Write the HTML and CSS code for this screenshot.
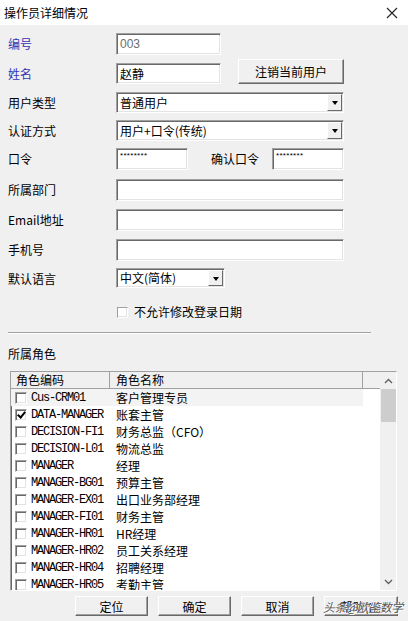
FILE: index.html
```html
<!DOCTYPE html>
<html lang="zh-CN">
<head>
    <meta charset="UTF-8">
    <title>操作员详细情况</title>
    <link rel="stylesheet" href="styles.css">
</head>
<body>
    <!-- window title -->
    <div class="titlebar">
        <span class="title">操作员详细情况</span>
        <svg class="close" width="12" height="12" viewBox="0 0 12 12">
            <path d="M1 1L11 11M11 1L1 11" stroke="#222" stroke-width="1.1" fill="none"/>
        </svg>
    </div>

    <div class="form">
        <div class="lbl blue">编号</div>
        <div class="cell"><div class="edit w105 disabled">003</div></div>

        <div class="lbl blue">姓名</div>
        <div class="cell">
            <div class="edit w105 h21">赵静</div>
            <button class="btn logout">注销当前用户</button>
        </div>

        <div class="lbl">用户类型</div>
        <div class="cell"><div class="combo wide">普通用户<span class="drop"></span></div></div>

        <div class="lbl">认证方式</div>
        <div class="cell"><div class="combo wide">用户+口令(传统)<span class="drop"></span></div></div>

        <div class="lbl">口令</div>
        <div class="cell">
            <div class="edit w72 pwd">********</div>
            <div class="lbl confirm">确认口令</div>
            <div class="edit w72 pwd">********</div>
        </div>

        <div class="lbl">所属部门</div>
        <div class="cell"><div class="edit wide"></div></div>

        <div class="lbl">Email地址</div>
        <div class="cell"><div class="edit wide"></div></div>

        <div class="lbl">手机号</div>
        <div class="cell"><div class="edit wide"></div></div>

        <div class="lbl">默认语言</div>
        <div class="cell"><div class="combo lang">中文(简体)<span class="drop"></span></div></div>

        <div></div>
        <div class="cell check-row"><span class="chk"></span>不允许修改登录日期</div>
    </div>

    <div class="sep"></div>
    <div class="section">所属角色</div>

    <div class="list">
        <div class="list-body">
            <div class="list-head">
                <div class="hcol c1">角色编码</div>
                <div class="hcol c2">角色名称</div>
                <div class="hcol c3"></div>
            </div>
            <div id="rows"></div>
        </div>
        <div class="scrollbar">
            <div class="sb-btn">
                <svg width="9" height="6" viewBox="0 0 9 6"><path d="M1 5L4.5 1.5L8 5" stroke="#606060" stroke-width="1.4" fill="none"/></svg>
            </div>
            <div class="thumb"></div>
            <div class="sb-track"></div>
            <div class="sb-btn">
                <svg width="9" height="6" viewBox="0 0 9 6"><path d="M1 1L4.5 4.5L8 1" stroke="#606060" stroke-width="1.4" fill="none"/></svg>
            </div>
        </div>
    </div>

    <div class="buttons">
        <button class="btn">定位</button>
        <button class="btn">确定</button>
        <button class="btn">取消</button>
        <button class="btn">帮助(H)</button>
        <span class="watermark">头条@欧鉴数学</span>
    </div>

    <script>
        const roles = [
            ["Cus-CRM01", "客户管理专员", false],
            ["DATA-MANAGER", "账套主管", true],
            ["DECISION-FI1", "财务总监（CFO）", false],
            ["DECISION-L01", "物流总监", false],
            ["MANAGER", "经理", false],
            ["MANAGER-BG01", "预算主管", false],
            ["MANAGER-EX01", "出口业务部经理", false],
            ["MANAGER-FI01", "财务主管", false],
            ["MANAGER-HR01", "HR经理", false],
            ["MANAGER-HR02", "员工关系经理", false],
            ["MANAGER-HR04", "招聘经理", false],
            ["MANAGER-HR05", "考勤主管", false]
        ];

        const rowsDiv = document.getElementById('rows');
        roles.forEach((r, i) => {
            const row = document.createElement('div');
            row.className = 'row' + (i === 0 ? ' current' : '');
            row.innerHTML = `<div class="code"><span class="chk${r[2] ? ' on' : ''}"></span>${r[0]}</div><div class="name">${r[1]}</div>`;
            rowsDiv.appendChild(row);
        });
    </script>
</body>
</html>
```

FILE: styles.css
```css
body { margin: 0; width: 408px; height: 621px; overflow: hidden; background: #f0f0f0; font-family: "Noto Sans CJK SC", "Liberation Sans", sans-serif; font-size: 12px; color: #000; }

.titlebar { height: 25px; background: #fff; display: flex; align-items: center; justify-content: space-between; padding: 0 10px 0 4px; }
.title { line-height: 25px; }
.close { margin-top: 1px; }

.form { display: grid; grid-template-columns: 108px 1fr; grid-template-rows: 30px 29px 28px 28px 31px 30px 30px 29px 36px 16px; padding: 8px 0 0 8px; }
.lbl { line-height: 22px; white-space: nowrap; }
.blue { color: #3434b4; }
.cell { display: flex; align-items: flex-start; }
.confirm { margin: 0 13px 0 23px; }

.edit { box-sizing: border-box; height: 22px; background: #fff; border: 1px solid; border-color: #a0a0a0 #fff #fff #a0a0a0; box-shadow: inset 1px 1px 0 #696969, inset -1px -1px 0 #e3e3e3; padding: 0 3px; line-height: 20px; white-space: nowrap; overflow: hidden; }
.h21 { height: 21px; line-height: 19px; }
.w105 { width: 105px; }
.w72 { width: 72px; }
.wide { width: 228px; }
.disabled { color: #6d6d6d; font-family: "Liberation Sans", sans-serif; }
.pwd { font-size: 8px; line-height: 14px; letter-spacing: 0.3px; font-family: "Liberation Sans", sans-serif; }

.combo { position: relative; box-sizing: border-box; height: 21px; background: #fff; border: 1px solid; border-color: #a0a0a0 #fff #fff #a0a0a0; box-shadow: inset 1px 1px 0 #696969, inset -1px -1px 0 #e3e3e3; padding: 0 3px; line-height: 19px; }
.lang { width: 109px; height: 20px; line-height: 18px; }
.drop { position: absolute; right: 1px; top: 1px; bottom: 1px; width: 15px; background: #f0f0f0; box-sizing: border-box; border: 1px solid; border-color: #fff #696969 #696969 #fff; }
.drop::after { content: ""; position: absolute; left: 4px; top: 6px; border-style: solid; border-width: 4px 3.5px 0 3.5px; border-color: #000 transparent transparent transparent; }

.btn { box-sizing: border-box; height: 20px; width: 73px; padding: 0; background: #f0f0f0; font: inherit; color: #000; border: 1px solid; border-color: #fff #696969 #696969 #fff; box-shadow: inset -1px -1px 0 #a0a0a0; }
.logout { width: 106px; height: 25px; margin: -4px 0 0 17px; }

.check-row { align-items: center; gap: 6px; line-height: 16px; }
.chk { box-sizing: border-box; width: 12px; height: 12px; background: #fff; border: 1px solid; border-color: #a0a0a0 #fff #fff #a0a0a0; box-shadow: inset 1px 1px 0 #696969, inset -1px -1px 0 #e3e3e3; flex: none; position: relative; }
.check-row .chk { margin-left: 1px; width: 11px; height: 11px; box-shadow: inset -1px -1px 0 #e3e3e3; }
.chk.on::after { content: ""; position: absolute; left: 3px; top: 0px; width: 3px; height: 6px; border: solid #000; border-width: 0 2px 2px 0; transform: rotate(40deg); }

.sep { margin: 12px 0 0 8px; width: 363px; border-top: 1px solid #a0a0a0; border-bottom: 1px solid #fff; }
.section { margin: 11px 0 0 8px; line-height: 17px; }

.list { box-sizing: border-box; margin: 9px 0 0 10px; width: 387px; height: 220px; display: flex; border: 1px solid; border-color: #a0a0a0 #fff #fff #a0a0a0; box-shadow: inset 1px 1px 0 #696969; overflow: hidden; background: #fff; }
.list-body { width: 369px; overflow: hidden; }
.list-head { display: flex; height: 17px; background: #f0f0f0; border-bottom: 1px solid #a0a0a0; box-sizing: border-box; }
.hcol { line-height: 16px; border-right: 1px solid #a0a0a0; box-sizing: border-box; }
.c1 { width: 99px; padding-left: 5px; }
.c2 { width: 253px; padding-left: 6px; }
.c3 { flex: 1; border-right: none; }

.row { display: flex; height: 17px; align-items: center; }
.row.current .code, .row.current .name { background: #f3f3f3; }
.code { display: flex; align-items: center; gap: 4px; width: 99px; height: 17px; padding-left: 4px; box-sizing: border-box; font-family: "Liberation Mono", monospace; font-size: 12px; letter-spacing: -1.2px; white-space: nowrap; }
.name { width: 253px; height: 17px; line-height: 17px; padding-left: 6px; box-sizing: border-box; white-space: nowrap; }

.scrollbar { width: 16px; display: flex; flex-direction: column; background: #f0f0f0; }
.sb-btn { height: 17px; display: flex; align-items: center; justify-content: center; flex: none; }
.thumb { height: 33px; margin: 0 0 0 1px; background: #cdcdcd; flex: none; }
.sb-track { flex: 1; }

.buttons { position: relative; display: flex; gap: 10px; margin: 5px 0 0 75px; }
.buttons .btn:last-of-type { width: 74px; }
.watermark { position: absolute; left: 248px; top: 2px; color: #555; font-size: 12px; font-style: italic; letter-spacing: -0.5px; text-shadow: 0 0 1px #fff, 1px 1px 0 #fff; }
```
